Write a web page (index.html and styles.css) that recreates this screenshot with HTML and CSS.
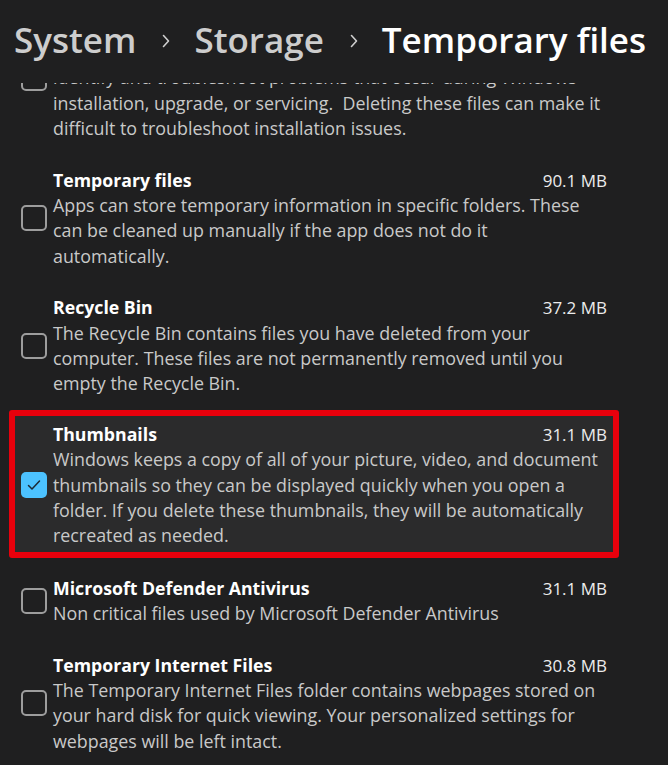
FILE: index.html
```html
<!DOCTYPE html>
<html lang="en">
<head>
<meta charset="utf-8">
<title>Temporary files</title>
<link rel="stylesheet" href="styles.css">
</head>
<body>
<div class="page">
  <header class="crumbs">
    <span class="crumb">System</span>
    <svg class="chev" viewBox="0 0 8 14" width="8" height="14"><path d="M1.5 1.5 L6.5 7 L1.5 12.5" fill="none" stroke="#cfcfcf" stroke-width="1.6" stroke-linecap="round" stroke-linejoin="round"/></svg>
    <span class="crumb">Storage</span>
    <svg class="chev chev-2" viewBox="0 0 8 14" width="8" height="14"><path d="M1.5 1.5 L6.5 7 L1.5 12.5" fill="none" stroke="#cfcfcf" stroke-width="1.6" stroke-linecap="round" stroke-linejoin="round"/></svg>
    <span class="crumb current">Temporary files</span>
  </header>
  <div class="scroller">
    <ul class="list">
      <li class="item">
        <span class="box"></span>
        <div class="body">
          <div class="head"><span class="name">Windows upgrade log files</span><span class="size">1.04 MB</span></div>
          <p class="desc">Windows upgrade log files contain information that can help<br>identify and troubleshoot problems that occur during Windows<br>installation, upgrade, or servicing.&nbsp; Deleting these files can make it<br>difficult to troubleshoot installation issues.</p>
        </div>
      </li>
      <li class="item">
        <span class="box"></span>
        <div class="body">
          <div class="head"><span class="name">Temporary files</span><span class="size">90.1 MB</span></div>
          <p class="desc">Apps can store temporary information in specific folders. These can be cleaned up manually if the app does not do it automatically.</p>
        </div>
      </li>
      <li class="item">
        <span class="box"></span>
        <div class="body">
          <div class="head"><span class="name">Recycle Bin</span><span class="size">37.2 MB</span></div>
          <p class="desc">The Recycle Bin contains files you have deleted from your computer. These files are not permanently removed until you empty the Recycle Bin.</p>
        </div>
      </li>
      <li class="item selected">
        <span class="box checked"><svg viewBox="0 0 16 16" width="16" height="16"><path d="M2.5 8.5 L6 12 L13.5 4" fill="none" stroke="#1b2a36" stroke-width="1.5" stroke-linecap="round" stroke-linejoin="round"/></svg></span>
        <div class="body">
          <div class="head"><span class="name">Thumbnails</span><span class="size">31.1 MB</span></div>
          <p class="desc">Windows keeps a copy of all of your picture, video, and document thumbnails so they can be displayed quickly when you open a folder. If you delete these thumbnails, they will be automatically recreated as needed.</p>
        </div>
      </li>
      <li class="item">
        <span class="box"></span>
        <div class="body">
          <div class="head"><span class="name">Microsoft Defender Antivirus</span><span class="size">31.1 MB</span></div>
          <p class="desc">Non critical files used by Microsoft Defender Antivirus</p>
        </div>
      </li>
      <li class="item">
        <span class="box"></span>
        <div class="body">
          <div class="head"><span class="name">Temporary Internet Files</span><span class="size">30.8 MB</span></div>
          <p class="desc">The Temporary Internet Files folder contains webpages stored on your hard disk for quick viewing. Your personalized settings for webpages will be left intact.</p>
        </div>
      </li>
    </ul>
  </div>
</div>
</body>
</html>
```

FILE: styles.css
```css
html, body {
  margin: 0;
  padding: 0;
  background: #1f1f20;
}
body {
  font-family: "Open Sans", "Noto Sans", sans-serif;
  color: #ffffff;
}
.page {
  width: 668px;
  height: 765px;
  display: flex;
  flex-direction: column;
  overflow: hidden;
}
.crumbs {
  display: flex;
  align-items: center;
  height: 83px;
  padding: 0 0 4px 14px;
  box-sizing: border-box;
  flex: none;
}
.crumb {
  font-size: 35px;
  font-weight: 600;
  color: #cdcdcd;
  line-height: 50px;
  white-space: nowrap;
}
.crumb.current {
  color: #ffffff;
}
.chev {
  margin: 2px 24px 0 26px;
  flex: none;
}
.chev-2 {
  margin: 2px 24px 0 26px;
}
.scroller {
  flex: 1;
  overflow: hidden;
}
.list {
  list-style: none;
  margin: -81.5px 0 0 9px;
  padding: 0;
  width: 610px;
}
.item {
  display: flex;
  align-items: center;
  gap: 6px;
  padding: 7px 6px;
  border: 6px solid transparent;
  border-radius: 3px;
}
.item.selected {
  border-color: #e8000c;
  background: #2b2b2c;
  padding-top: 6px;
  padding-bottom: 3px;
  margin-bottom: 5px;
}
.box {
  flex: none;
  width: 26px;
  height: 26px;
  box-sizing: border-box;
  border: 2px solid #9d9d9d;
  border-radius: 5px;
  display: flex;
  align-items: center;
  justify-content: center;
}
.box.checked {
  border: none;
  background: #4cc2ff;
}
.body {
  flex: 1;
  min-width: 0;
  font-size: 17.85px;
  line-height: 25.4px;
}
.head {
  display: flex;
  justify-content: space-between;
  align-items: baseline;
}
.name {
  font-weight: 700;
  font-size: 17.7px;
  color: #ffffff;
}
.size {
  font-size: 17px;
  color: #ececec;
}
.desc {
  margin: 0;
  max-width: 548px;
  color: #c9c9c9;
}
```
